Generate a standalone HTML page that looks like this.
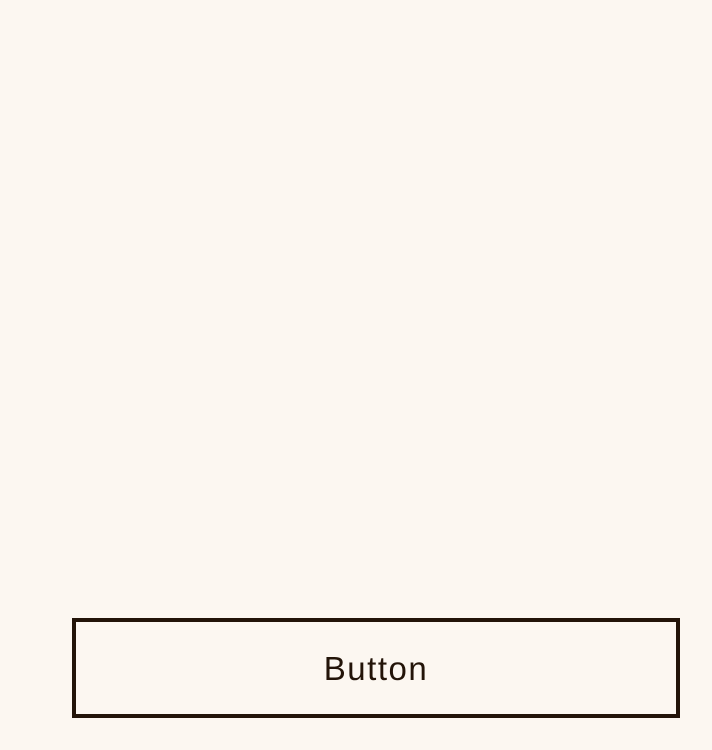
<!DOCTYPE html>
<html><head><style>
html,body{margin:0;padding:0;width:712px;height:750px;background:#fcf7f1;overflow:hidden}
.btn{position:absolute;left:72px;top:618px;width:600px;height:92px;border:4px solid #231409;box-sizing:content-box;}
.btn span{position:absolute;left:0;right:0;top:0;bottom:0;display:flex;align-items:center;justify-content:center;font-family:"Liberation Sans",sans-serif;font-size:33px;letter-spacing:1.5px;color:#231409;padding-top:2px}
</style></head><body>
<div class="btn"><span>Button</span></div>
</body></html>
